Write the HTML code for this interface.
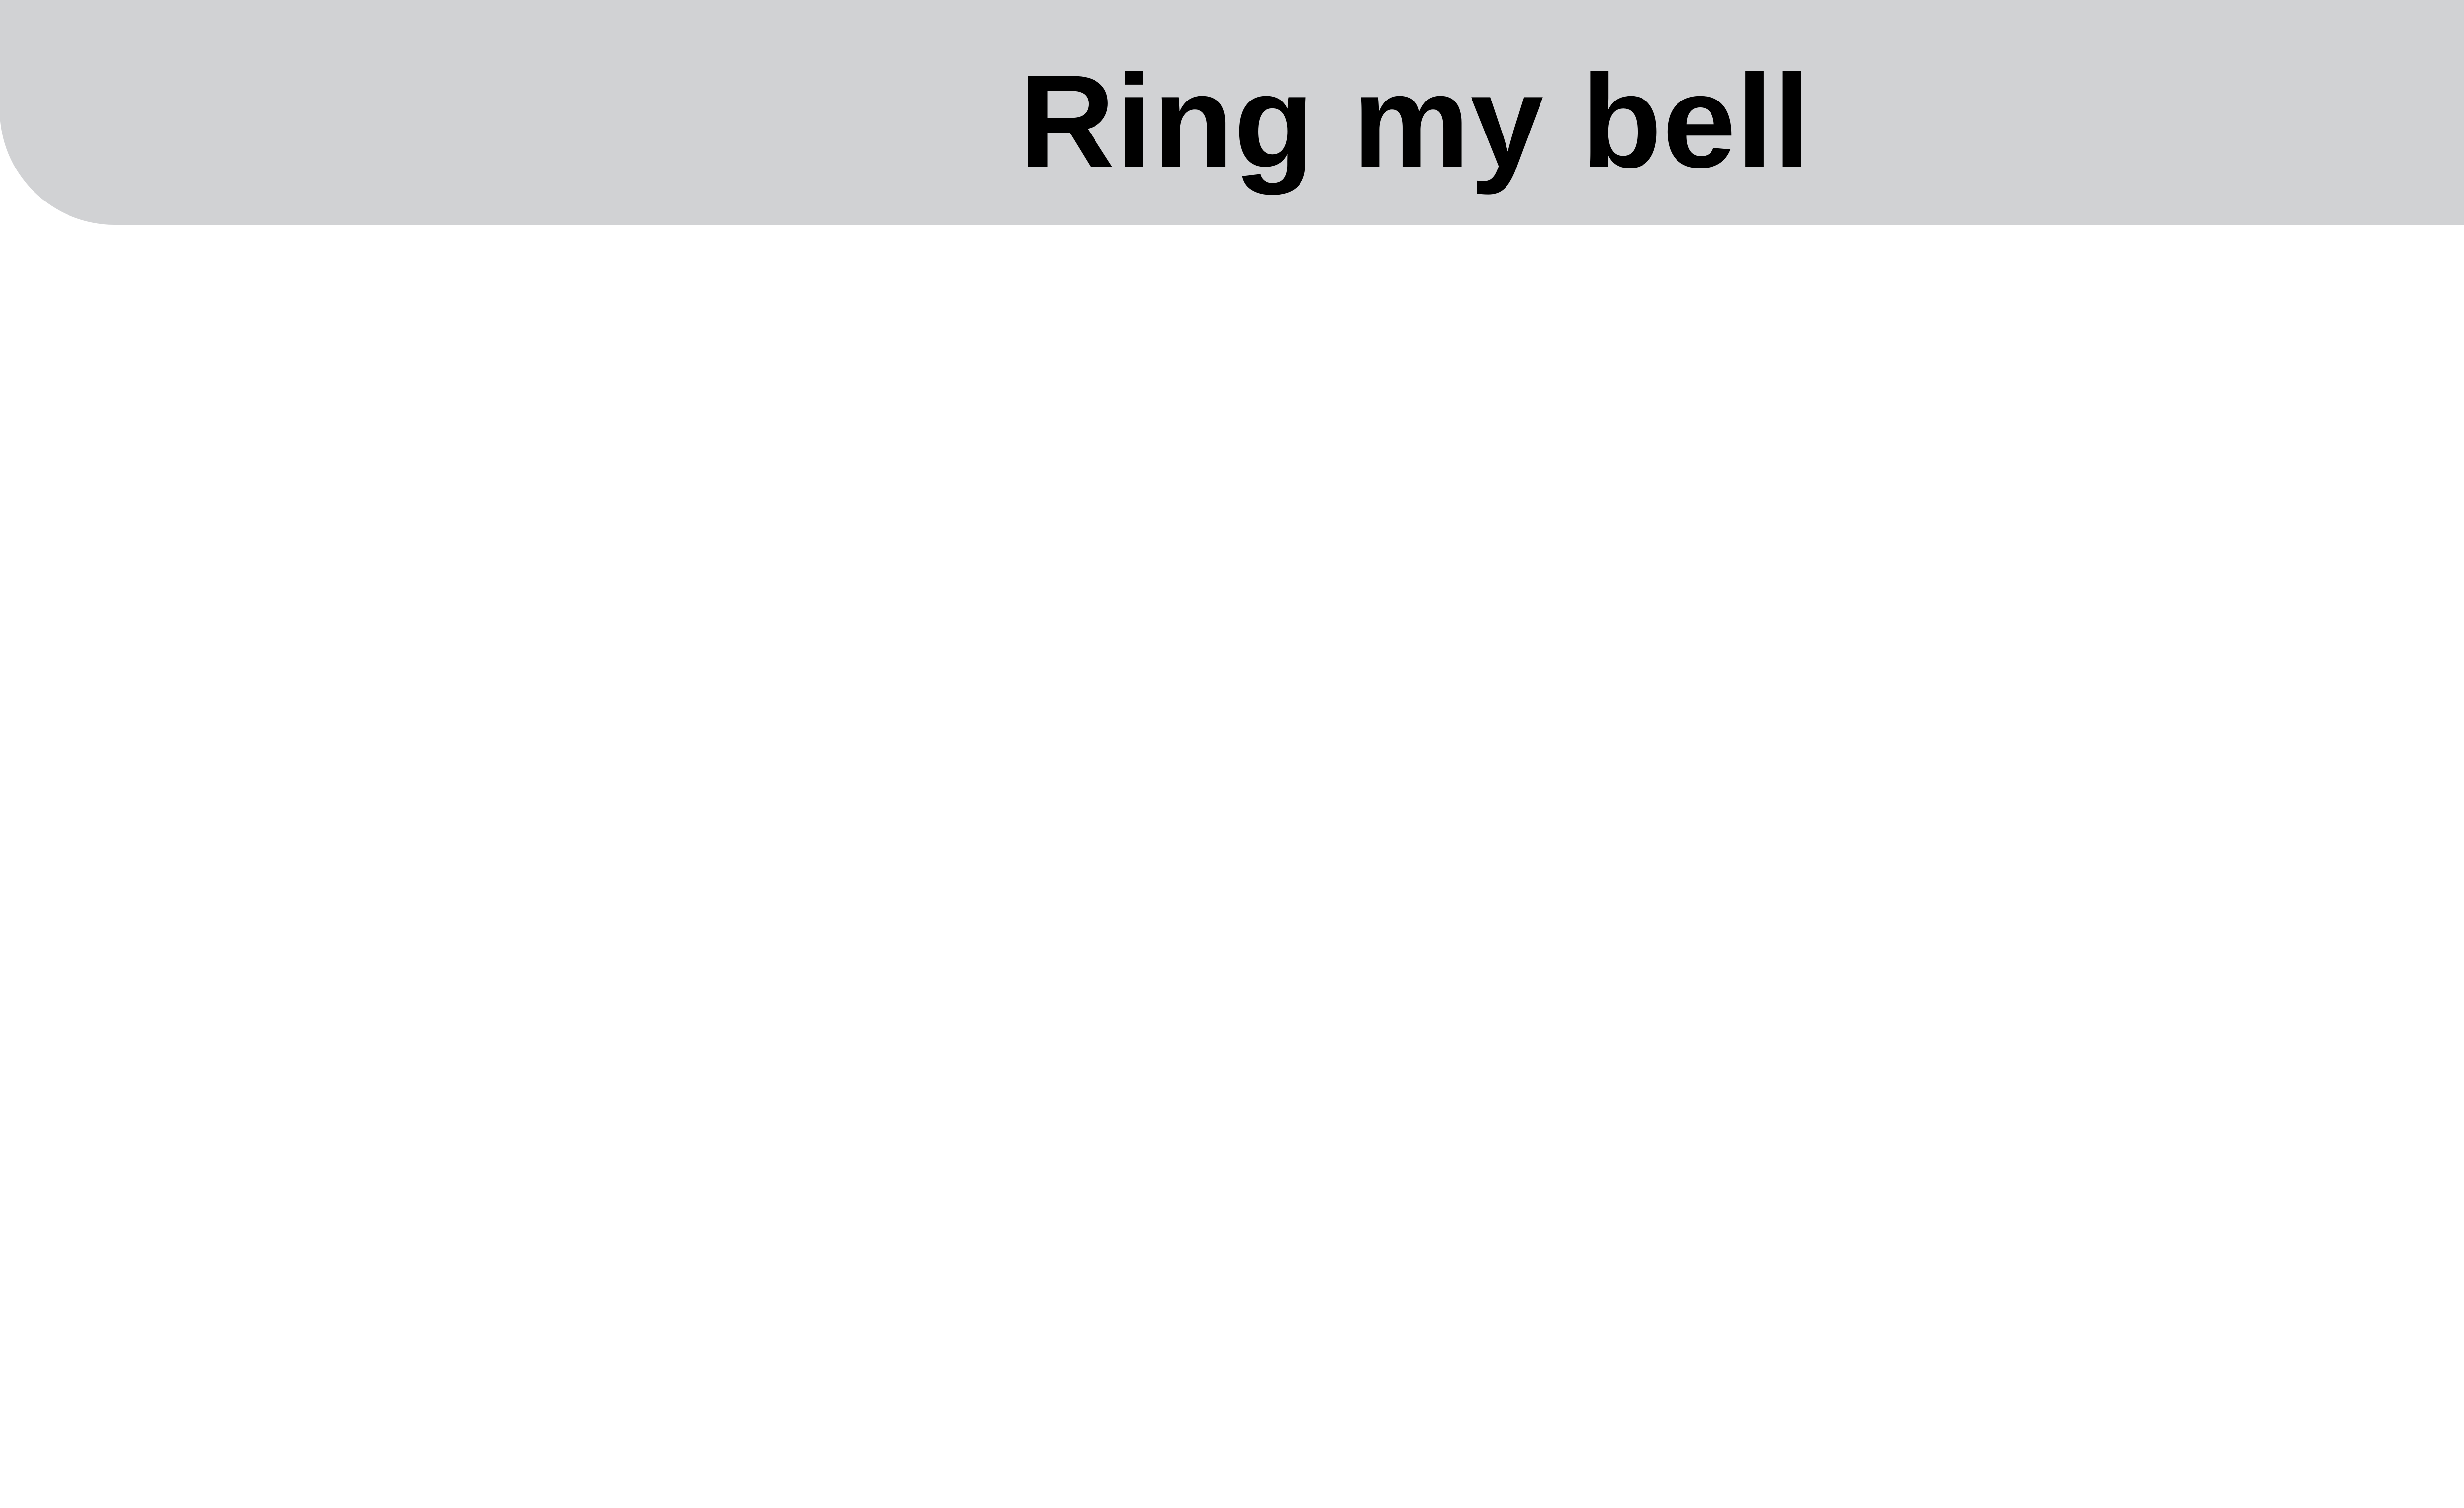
<!DOCTYPE html>
<html><head><meta charset="utf-8"><style>
html,body{margin:0;padding:0;background:#fff;overflow:hidden;}
html{width:5443px;height:3061px;}
body{width:5443px;height:3061px;position:relative;overflow:hidden;}
.hdr{position:absolute;left:0;top:0;width:5443px;height:456px;background:#d1d2d4;border-radius:0 0 232px 232px;}
.t{position:absolute;left:2069px;top:112px;white-space:nowrap;font-family:"Liberation Sans",sans-serif;font-weight:bold;font-size:268px;line-height:1;color:#000;letter-spacing:1px;}
</style></head><body>
<div class="hdr"></div>
<div class="t">Ring my bell</div>
</body></html>
